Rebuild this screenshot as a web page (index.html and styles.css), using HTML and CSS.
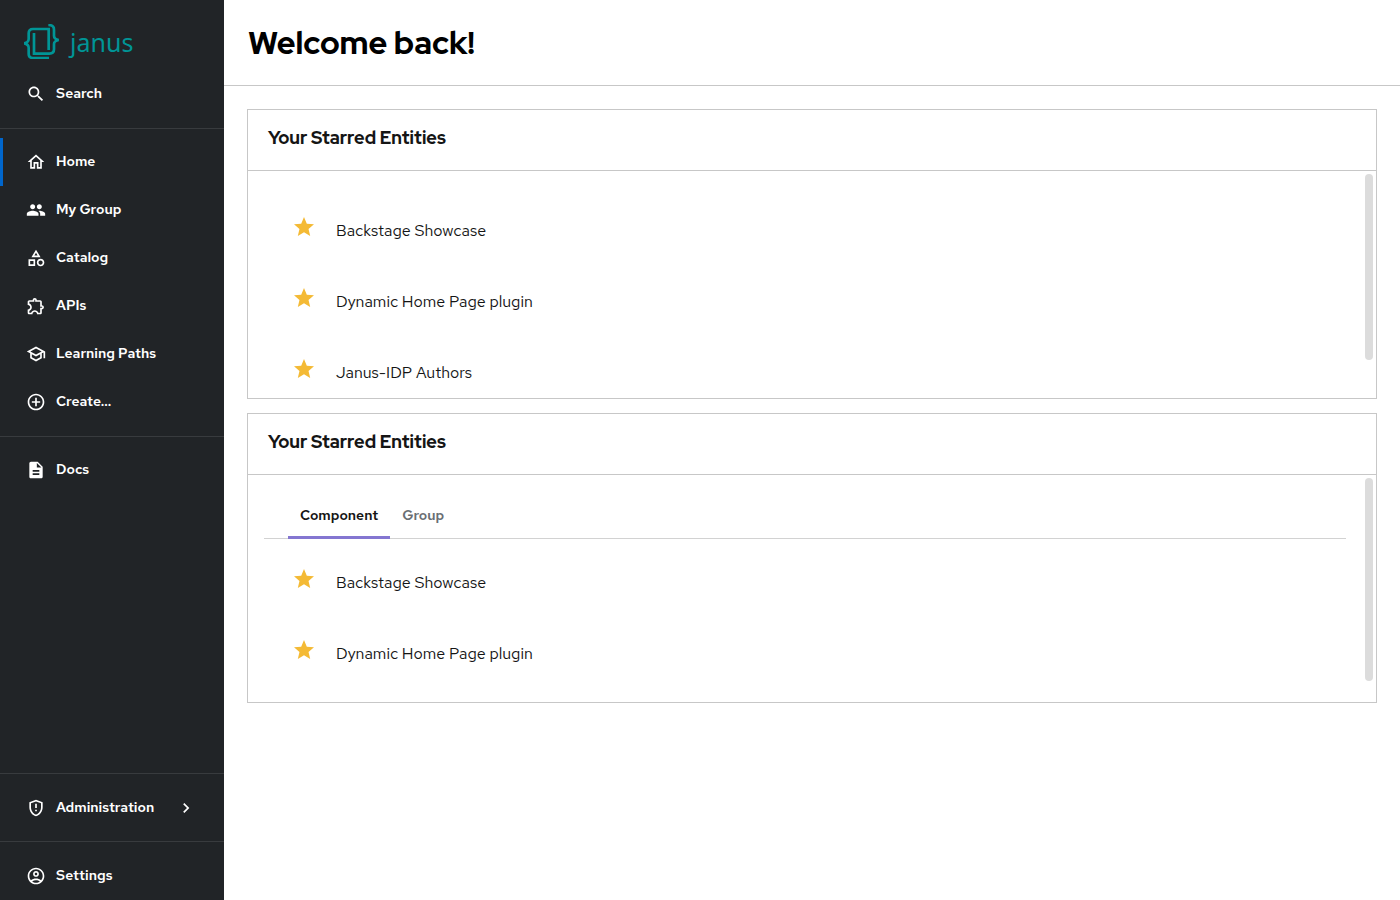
FILE: index.html
```html
<!DOCTYPE html>
<html lang="en">
<head>
<meta charset="utf-8">
<title>Welcome back!</title>
<link rel="stylesheet" href="styles.css">
</head>
<body>
<svg class="sprite" aria-hidden="true">
  <symbol id="star" viewBox="0 0 24 24"><path d="M12 17.27 18.18 21l-1.64-7.03L22 9.24l-7.19-.61L12 2 9.19 8.63 2 9.24l5.46 4.73L5.82 21z"/></symbol>
</svg>
<div class="app">
  <nav class="sidebar" aria-label="Main">
    <a class="logo" href="#">
      <svg class="logo-mark" viewBox="72 72 105 105" aria-hidden="true"><path d="M150 87H99Q86 87 86 100V117Q86 127 73 130Q86 133 86 143V161Q86 174 99 174H147M146 87V150M102 99V161H148Q162 161 162 148V132Q162 123 176 120Q162 117 162 107V89Q162 75 145 75"/></svg>
      <span>janus</span>
    </a>
    <button class="item" type="button"><svg viewBox="0 0 24 24"><path d="M15.5 14h-.79l-.28-.27C15.41 12.59 16 11.11 16 9.5 16 5.91 13.09 3 9.5 3S3 5.91 3 9.5 5.91 16 9.5 16c1.61 0 3.09-.59 4.23-1.57l.27.28v.79l5 4.99L20.49 19l-4.99-5zm-6 0C7.01 14 5 11.99 5 9.5S7.01 5 9.5 5 14 7.01 14 9.5 11.99 14 9.5 14z"/></svg><span>Search</span></button>
    <hr>
    <a class="item active" href="#" aria-current="page"><svg viewBox="0 0 24 24"><path d="m12 5.69 5 4.5V18h-2v-6H9v6H7v-7.81l5-4.5M12 3 2 12h3v8h6v-6h2v6h6v-8h3L12 3z"/></svg><span>Home</span></a>
    <a class="item" href="#"><svg viewBox="0 0 24 24"><path d="M16 11c1.66 0 2.99-1.34 2.99-3S17.66 5 16 5c-1.66 0-3 1.34-3 3s1.34 3 3 3zm-8 0c1.66 0 2.99-1.34 2.99-3S9.66 5 8 5C6.34 5 5 6.34 5 8s1.34 3 3 3zm0 2c-2.33 0-7 1.17-7 3.5V19h14v-2.5c0-2.33-4.67-3.5-7-3.5zm8 0c-.29 0-.62.02-.97.05 1.16.84 1.97 1.97 1.97 3.45V19h6v-2.5c0-2.33-4.67-3.5-7-3.5z"/></svg><span>My Group</span></a>
    <a class="item" href="#"><svg viewBox="0 0 24 24"><path d="m12 2-5.5 9h11L12 2zm0 3.84L13.93 9h-3.87L12 5.84zM17.5 13c-2.49 0-4.5 2.01-4.5 4.5s2.01 4.5 4.5 4.5 4.5-2.01 4.5-4.5-2.01-4.5-4.5-4.5zm0 7c-1.38 0-2.5-1.12-2.5-2.5s1.12-2.5 2.5-2.5 2.5 1.12 2.5 2.5-1.12 2.5-2.5 2.5zM3 21.5h8v-8H3v8zm2-6h4v4H5v-4z"/></svg><span>Catalog</span></a>
    <a class="item" href="#"><svg viewBox="0 0 24 24"><path d="M10.5 4.5c.28 0 .5.22.5.5v2h6v6h2c.28 0 .5.22.5.5s-.22.5-.5.5h-2v6h-2.12c-.68-1.75-2.39-3-4.38-3s-3.7 1.25-4.38 3H4v-2.12c1.75-.68 3-2.39 3-4.38 0-1.99-1.24-3.7-2.99-4.38L4 7h6V5c0-.28.22-.5.5-.5m0-2C9.12 2.5 8 3.62 8 5H4c-1.1 0-1.99.9-1.99 2v3.8h.29c1.49 0 2.7 1.21 2.7 2.7s-1.21 2.7-2.7 2.7H2V20c0 1.1.9 2 2 2h3.8v-.3c0-1.49 1.21-2.7 2.7-2.7s2.7 1.21 2.7 2.7v.3H17c1.1 0 2-.9 2-2v-4c1.38 0 2.5-1.12 2.5-2.5S20.38 11 19 11V7c0-1.1-.9-2-2-2h-4c0-1.38-1.12-2.5-2.5-2.5z"/></svg><span>APIs</span></a>
    <a class="item" href="#"><svg viewBox="0 0 24 24"><path d="M12 3 1 9l4 2.18v6L12 21l7-3.82v-6l2-1.09V17h2V9L12 3zm6.82 6L12 12.72 5.18 9 12 5.28 18.82 9zM17 15.99l-5 2.73-5-2.73v-3.72L12 15l5-2.73v3.72z"/></svg><span>Learning Paths</span></a>
    <a class="item" href="#"><svg viewBox="0 0 24 24"><path d="M13 7h-2v4H7v2h4v4h2v-4h4v-2h-4V7zm-1-5C6.48 2 2 6.48 2 12s4.48 10 10 10 10-4.48 10-10S17.52 2 12 2zm0 18c-4.41 0-8-3.59-8-8s3.59-8 8-8 8 3.59 8 8-3.59 8-8 8z"/></svg><span>Create...</span></a>
    <hr>
    <a class="item" href="#"><svg viewBox="0 0 24 24"><path d="M14 2H6c-1.1 0-1.99.9-1.99 2L4 20c0 1.1.89 2 1.99 2H18c1.1 0 2-.9 2-2V8l-6-6zm2 16H8v-2h8v2zm0-4H8v-2h8v2zm-3-5V3.5L18.5 9H13z"/></svg><span>Docs</span></a>
    <div class="sidebar-foot">
      <hr>
      <button class="item" type="button"><svg viewBox="0 0 24 24"><path d="M12 2 4 5v6.09c0 5.05 3.41 9.76 8 10.91 4.59-1.15 8-5.86 8-10.91V5l-8-3zm6 9.09c0 4-2.55 7.7-6 8.83-3.45-1.13-6-4.82-6-8.83v-4.7l6-2.25 6 2.25v4.7zM11 14h2v2h-2zM11 7h2v5h-2z"/></svg><span>Administration</span><svg class="chevron" viewBox="0 0 24 24"><path d="M10 6 8.59 7.41 13.17 12l-4.58 4.59L10 18l6-6z"/></svg></button>
      <hr>
      <a class="item" href="#"><svg viewBox="0 0 24 24"><path d="M12 2C6.48 2 2 6.48 2 12s4.48 10 10 10 10-4.48 10-10S17.52 2 12 2zM7.35 18.5C8.66 17.56 10.26 17 12 17s3.34.56 4.65 1.5C15.34 19.44 13.74 20 12 20s-3.34-.56-4.65-1.5zm10.79-1.38C16.45 15.8 14.32 15 12 15s-4.45.8-6.14 2.12C4.7 15.73 4 13.95 4 12c0-4.42 3.58-8 8-8s8 3.58 8 8c0 1.95-.7 3.73-1.86 5.12zM12 6c-1.93 0-3.5 1.57-3.5 3.5S10.07 13 12 13s3.5-1.57 3.5-3.5S13.93 6 12 6zm0 5c-.83 0-1.5-.67-1.5-1.5S11.17 8 12 8s1.5.67 1.5 1.5S12.83 11 12 11z"/></svg><span>Settings</span></a>
    </div>
  </nav>
  <main class="main">
    <header class="page-header"><h1>Welcome back!</h1></header>
    <div class="content">
      <section class="card">
        <h2>Your Starred Entities</h2>
        <div class="card-body">
          <ul class="list">
            <li><button type="button" aria-label="Unstar"><svg><use href="#star"/></svg></button><a href="#">Backstage Showcase</a></li>
            <li><button type="button" aria-label="Unstar"><svg><use href="#star"/></svg></button><a href="#">Dynamic Home Page plugin</a></li>
            <li><button type="button" aria-label="Unstar"><svg><use href="#star"/></svg></button><a href="#">Janus-IDP Authors</a></li>
          </ul>
          <div class="track"><div class="thumb" style="height:84%"></div></div>
        </div>
      </section>
      <section class="card">
        <h2>Your Starred Entities</h2>
        <div class="card-body">
          <div class="pane">
            <div class="tabs" role="tablist">
              <button class="tab selected" type="button" role="tab" aria-selected="true">Component</button>
              <button class="tab" type="button" role="tab" aria-selected="false">Group</button>
            </div>
            <ul class="list compact">
              <li><button type="button" aria-label="Unstar"><svg><use href="#star"/></svg></button><a href="#">Backstage Showcase</a></li>
              <li><button type="button" aria-label="Unstar"><svg><use href="#star"/></svg></button><a href="#">Dynamic Home Page plugin</a></li>
            </ul>
          </div>
          <div class="track"><div class="thumb" style="height:92%"></div></div>
        </div>
      </section>
    </div>
  </main>
</div>
</body>
</html>
```
FILE: styles.css
```css
* { box-sizing: border-box; }
body { margin: 0; background: #fff; color: #151515; font-family: "Red Hat Text", Inter, "Liberation Sans", sans-serif; }
a { color: inherit; text-decoration: none; }
button { margin: 0; padding: 0; border: 0; background: none; color: inherit; font: inherit; cursor: pointer; }
.sprite { display: none; }
.app { display: flex; min-height: 100vh; }

.sidebar { display: flex; flex-direction: column; flex: 0 0 224px; background: #212427; color: #fff; }
.logo { display: flex; align-items: center; gap: 11px; height: 70px; padding: 13px 24px 0; color: #009596; font: 400 25px/36px "Noto Sans", "Open Sans", sans-serif; }
.logo-mark { width: 35px; height: 35px; fill: none; stroke: #009596; stroke-width: 8; }
.item { display: flex; align-items: center; gap: 10px; width: 100%; height: 48px; padding: 0 28px 0 23px; border-left: 3px solid transparent; color: #fff; font-size: 14px; font-weight: 600; line-height: 20px; text-align: left; }
.item span { padding-bottom: 2px; }
.item svg { flex: none; width: 20px; height: 20px; fill: #fff; }
.item .chevron { margin-left: auto; }
.active { border-left-color: #06c; }
.sidebar hr { flex: none; width: 100%; height: 1px; margin: 10px 0 9px; border: 0; background: #383b3e; }
.sidebar-foot { margin-top: auto; }
.sidebar-foot hr { margin: 9px 0 10px; }

.main { flex: 1; min-width: 0; }
.page-header { padding: 23px 24px 22px; border-bottom: 1px solid #c7c7c7; }
h1, h2 { font-family: "Red Hat Display", "Red Hat Text", Inter, sans-serif; }
h1 { margin: 0; color: #000; font-size: 32px; font-weight: 800; line-height: 40px; }
.content { display: flex; flex-direction: column; gap: 14px; padding: 23px; }
.card { border: 1px solid #c7c7c7; }
h2 { margin: 0; padding: 16px 20px 20px; border-bottom: 1px solid #c7c7c7; font-size: 18px; font-weight: 800; line-height: 24px; }
.card-body { display: flex; justify-content: space-between; }
.list { flex: 1; margin: 0; height: 227px; padding: 24px 16px 0 44px; overflow: hidden; list-style: none; }
.list li { display: flex; align-items: center; gap: 20px; height: 71px; font-size: 16px; line-height: 24px; }
.list button { height: 31px; }
.list svg { display: block; width: 24px; height: 24px; margin-bottom: 7px; fill: #f4ba35; }
.pane { flex: 1; height: 227px; padding: 16px 19px 0 16px; overflow: hidden; }
.list.compact { height: auto; padding: 8px 0 0 28px; }
.tabs { display: flex; height: 48px; padding-left: 24px; border-bottom: 1px solid #d2d2d2; }
.tab { height: 48px; padding: 2px 12px 0; border-bottom: 3px solid transparent; color: #6a6e73; font-size: 14px; font-weight: 600; }
.selected { border-bottom-color: #8476d1; color: #151515; }
.track { flex: none; width: 11px; padding: 3px 3px 3px 0; }
.thumb { border-radius: 4px; background: #dcdcdc; }
```
